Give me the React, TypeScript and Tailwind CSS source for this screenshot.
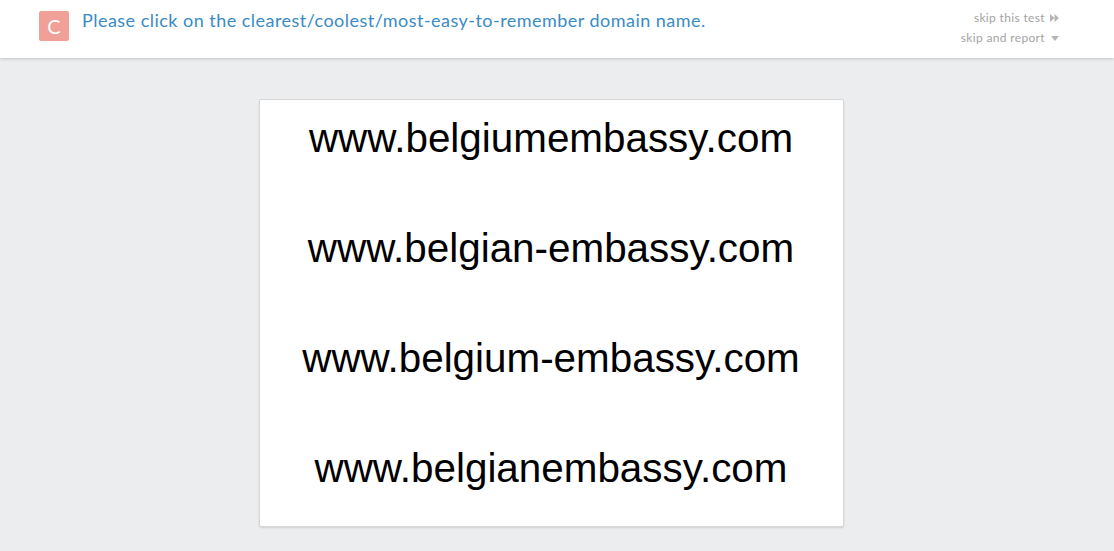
export default function App() {
  const domains = [
    "www.belgiumembassy.com",
    "www.belgian-embassy.com",
    "www.belgium-embassy.com",
    "www.belgianembassy.com",
  ];

  return (
    <div className="min-h-screen h-[551px] overflow-hidden bg-[#ecedef]">
      {/* top bar */}
      <header className="relative z-10 h-[58px] bg-white shadow-[0_1px_3px_rgba(0,0,0,0.18)] flex items-start justify-between pl-[39px] pr-[55px]">
        <div className="flex items-start gap-[13px] pt-[11px]">
          <div className="w-[30px] h-[30px] rounded-[2px] bg-[#f0a097] flex items-center justify-center text-white text-[20px] font-['Lato',sans-serif] leading-none">
            C
          </div>
          <p className="-mt-[4px] text-[18px] text-[#3a8bc4] font-['Lato',sans-serif] tracking-[0.47px]">
            Please click on the clearest/coolest/most-easy-to-remember domain
            name.
          </p>
        </div>
        <div className="flex flex-col items-end gap-[6px] pt-[11px] text-[12px] leading-[14px] tracking-[0.35px] text-[#a3a3a3] font-['Lato',sans-serif]">
          <div className="flex items-center gap-[5px]">
            <span>skip this test</span>
            <svg width="9" height="8" viewBox="0 0 9 8" fill="#b5b5b5">
              <path d="M0 0 L4.5 4 L0 8 Z" />
              <path d="M4.5 0 L9 4 L4.5 8 Z" />
            </svg>
          </div>
          <div className="flex items-center gap-[6px]">
            <span>skip and report</span>
            <svg width="8" height="5" viewBox="0 0 8 5" fill="#b5b5b5">
              <path d="M0 0 L8 0 L4 5 Z" />
            </svg>
          </div>
        </div>
      </header>

      {/* choices */}
      <main className="flex justify-center pt-[41px] pr-[12px]">
        <div className="w-[585px] h-[428px] bg-white rounded-[2px] border border-[#d6d6d6] shadow-[0_1px_2px_rgba(0,0,0,0.12)] flex flex-col items-center gap-[64px] pt-[15px]">
          {domains.map((d) => (
            <div
              key={d}
              className="shrink-0 w-full text-center text-[40.4px] leading-[46px] text-black font-['Liberation_Sans',Arial,sans-serif] cursor-pointer"
            >
              {d}
            </div>
          ))}
        </div>
      </main>
    </div>
  );
}
